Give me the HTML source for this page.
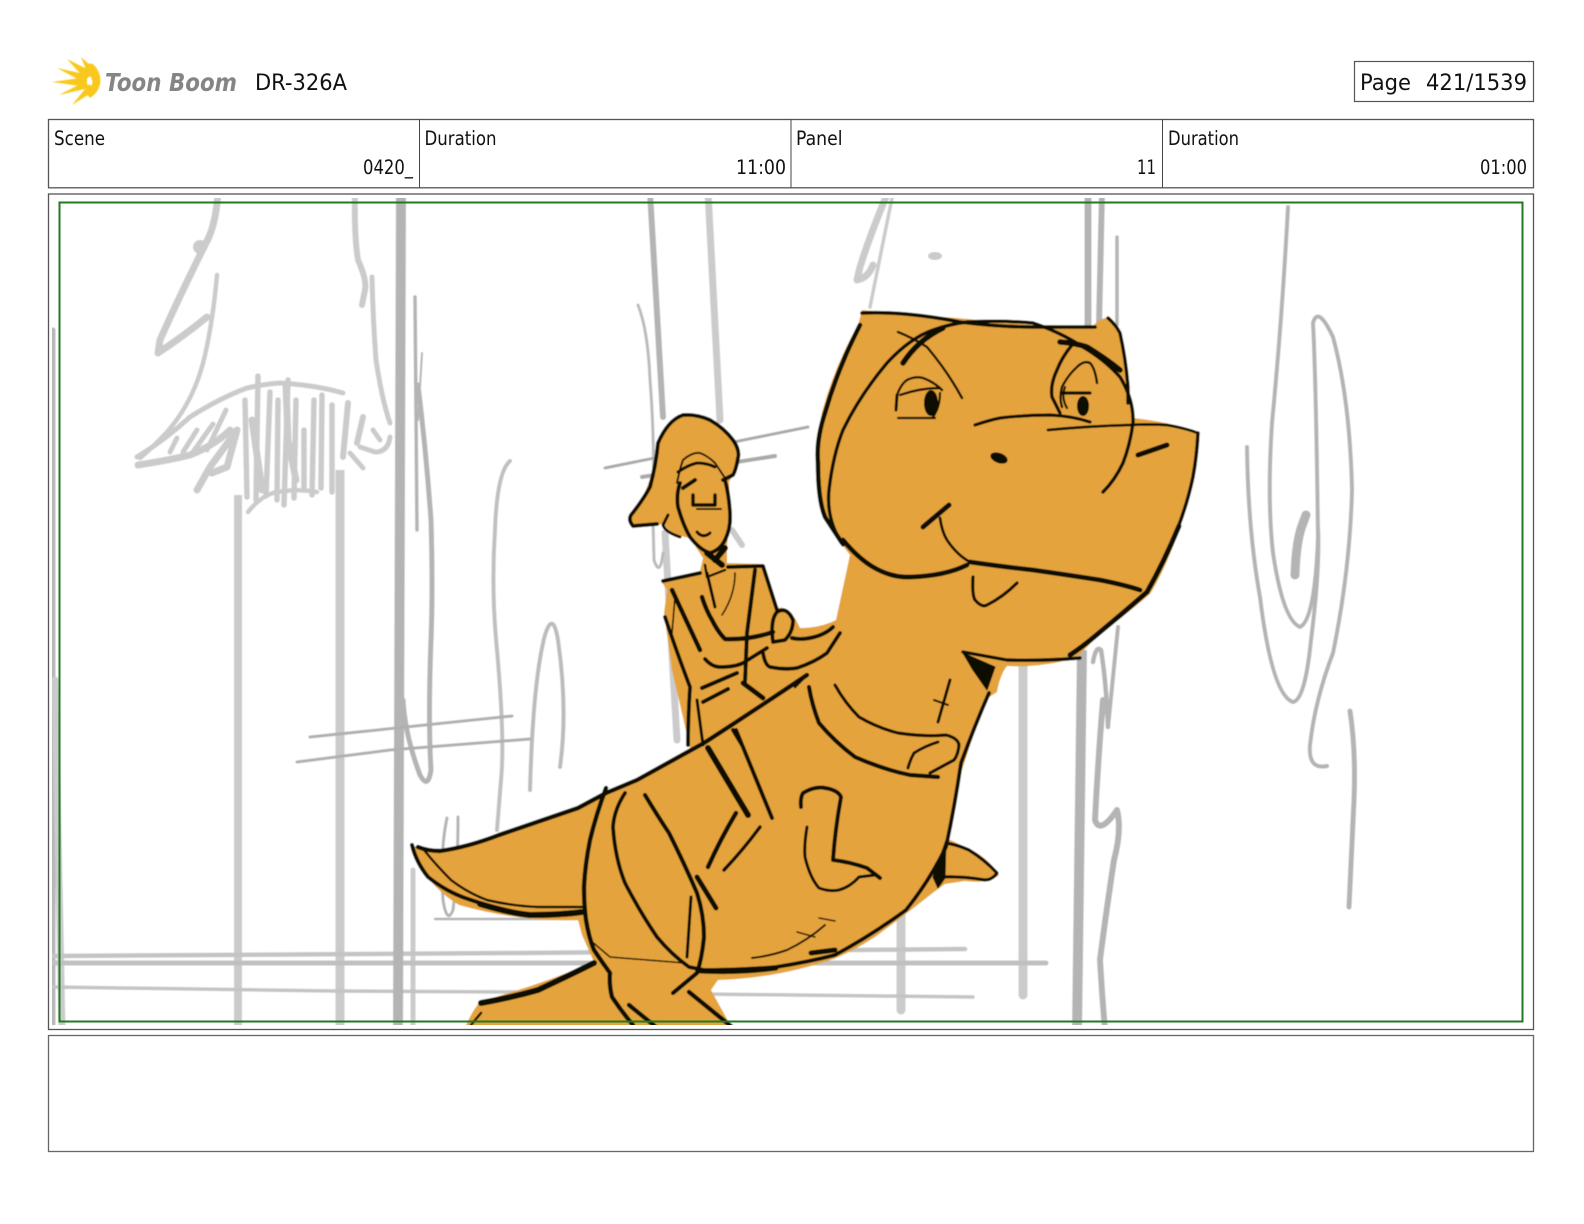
<!DOCTYPE html>
<html lang="en">
<head>
<meta charset="utf-8">
<title>DR-326A Page 421/1539</title>
<style>
html,body{margin:0;padding:0;background:#fff;width:1584px;height:1224px;overflow:hidden}
svg{display:block}
text{font-family:"DejaVu Sans","Liberation Sans",sans-serif;fill:#111}
</style>
</head>
<body>
<svg width="1584" height="1224" viewBox="0 0 1584 1224" xmlns="http://www.w3.org/2000/svg">
<defs>
<clipPath id="c"><rect x="52" y="198" width="1476" height="827"/></clipPath>
<filter id="soft" x="0" y="0" width="100%" height="100%"><feGaussianBlur stdDeviation="0.5"/></filter>
<filter id="softer" x="-5%" y="-5%" width="110%" height="110%"><feGaussianBlur stdDeviation="0.4"/></filter>
</defs>

<!-- Logo -->
<g fill="#f8c91f" filter="url(#softer)">
<path d="M52 82 L87 77 L87 87 Z"/>
<path d="M57 68 L89 75 L85 83 Z"/>
<path d="M67 59 L93 72 L86 80 Z"/>
<path d="M81 57 L98 72 L89 77 Z"/>
<path d="M59 95 L86 81 L89 88 Z"/>
<path d="M72 105 L89 84 L96 90 Z"/>
<path d="M85 63 L93 64 Q102 73 100 84 Q98 93 90 98 L86 93 Q92 89 92 82 Q92 75 86 73 Z"/>
</g>
<circle cx="90" cy="82" r="2.5" fill="#fff"/>
<text x="105" y="91" font-size="24.5" font-style="italic" font-weight="bold" textLength="132" lengthAdjust="spacingAndGlyphs" style="fill:#858585">Toon Boom</text>
<text x="255" y="90" font-size="22.4" textLength="92" lengthAdjust="spacingAndGlyphs">DR-326A</text>

<!-- Page box -->
<rect x="1354.5" y="61.5" width="179" height="40" fill="#fff" stroke="#555" stroke-width="1.2"/>
<text x="1360" y="90" font-size="22.4" textLength="51" lengthAdjust="spacingAndGlyphs">Page</text>
<text x="1426" y="90" font-size="22.4" textLength="101" lengthAdjust="spacingAndGlyphs">421/1539</text>

<!-- Header table -->
<rect x="48.5" y="119.5" width="1485" height="68.3" fill="#fff" stroke="#555" stroke-width="1.3"/>
<path d="M419.5 119.5V187.5M791 119.5V187.5M1162.5 119.5V187.5" stroke="#444" stroke-width="1" fill="none"/>
<text x="54" y="145" font-size="19.7" textLength="51" lengthAdjust="spacingAndGlyphs">Scene</text>
<text x="363" y="174" font-size="19.7" textLength="50" lengthAdjust="spacingAndGlyphs">0420_</text>
<text x="424.5" y="145" font-size="19.7" textLength="72" lengthAdjust="spacingAndGlyphs">Duration</text>
<text x="736" y="174" font-size="19.7" textLength="50" lengthAdjust="spacingAndGlyphs">11:00</text>
<text x="796" y="145" font-size="19.7" textLength="46.5" lengthAdjust="spacingAndGlyphs">Panel</text>
<text x="1137" y="174" font-size="19.7" textLength="19" lengthAdjust="spacingAndGlyphs">11</text>
<text x="1168" y="145" font-size="19.7" textLength="71" lengthAdjust="spacingAndGlyphs">Duration</text>
<text x="1480" y="174" font-size="19.7" textLength="47" lengthAdjust="spacingAndGlyphs">01:00</text>

<!-- Panel frame -->
<rect x="48.5" y="194" width="1485" height="835.5" fill="#fff" stroke="#555" stroke-width="1.3"/>

<g clip-path="url(#c)">
<g filter="url(#soft)">
<rect x="52" y="198" width="1476" height="827" fill="#fff"/>
<!-- Background pencil -->
<g fill="none" stroke-linecap="round" stroke-linejoin="round">
<g stroke="#cbcbcb">
<path stroke-width="5" stroke="#b8b8b8" d="M53 330 L53 1030"/>
<path stroke-width="7" d="M55 680 L62 1030"/>
<path stroke-width="8" stroke-linecap="butt" d="M238 495V1030"/>
<path stroke-width="9" stroke-linecap="butt" d="M340 470V1030"/>
<path stroke-width="9" d="M901 905V1010"/>
<path stroke-width="9" d="M1023 660V995"/>
<path stroke-width="7" d="M708 192L720 420"/>
<path stroke-width="7" d="M665 533L677 740"/>
<path stroke-width="6" d="M732 530L742 545"/>
<path stroke-width="5" d="M413 870V1030"/>
<path stroke-width="4.5" stroke="#c4c4c4" d="M52 956L520 953L965 949"/>
<path stroke-width="5" stroke="#c0c0c0" d="M52 963L520 963L1046 963"/>
<path stroke-width="3.5" stroke="#c4c4c4" d="M52 987L333 991L520 992L973 997"/>
<!-- Left tree -->
<path stroke-width="7" d="M218 192 Q216 225 206 243 Q180 295 160 340 L158 353 Q185 335 207 317"/>
<circle cx="200" cy="247" r="7" fill="#cbcbcb" stroke="none"/>
<path stroke-width="4.5" d="M217 275 Q213 320 205 355 Q195 400 167 432 Q150 450 140 458"/>
<path stroke-width="6" d="M355 192 Q354 235 358 260 Q367 280 365 290 L362 305"/>
<path stroke-width="5" d="M372 277 Q373 320 376 360 Q382 400 390 423"/>
<path stroke-width="5" d="M137 457 Q165 440 190 417 Q220 398 247 388 Q265 384 280 383 Q315 385 343 393"/>
<path stroke-width="7" d="M138 465 Q170 460 190 455 Q215 445 230 430"/>
<path stroke-width="7" d="M197 490 L210 467 L237 430 L227 467 L212 473"/>
<path stroke-width="5" d="M170 452L177 438M183 452L197 430M193 452L213 424M207 450L226 410"/>
<path stroke-width="5.5" d="M245 400L247 497M258 376L256 500M270 392L266 496M278 400L277 500M288 380L284 505M296 400L294 498M304 430L304 490M314 400L312 495M322 395L321 488M332 405L332 492"/>
<path stroke-width="7" d="M286 385L288 440L296 480M252 420L262 490"/>
<path stroke-width="6" d="M348 403L343 457M363 417L357 443"/>
<path stroke-width="5" d="M373 430L380 440M390 437 Q388 452 375 452 L360 447M350 453L363 468"/>
<path stroke-width="4.5" d="M248 512 Q260 497 273 493 Q295 488 317 492"/>
<!-- Top pencil -->
<path stroke-width="7" d="M888 192 Q870 235 860 267 L857 280 Q868 278 873 265"/>
<path stroke-width="3.5" d="M892 198 L870 307"/>
<ellipse cx="935" cy="256" rx="7" ry="4" fill="#cbcbcb" stroke="none"/>
</g>
<g stroke="#b4b4b4">
<path stroke-width="10" stroke-linecap="butt" d="M401 192L398 1030"/>
<path stroke-width="3.5" d="M415 297L417 530"/>
<path stroke-width="2" d="M422 353L418 420"/>
<path stroke-width="5" d="M418 385 Q426 450 431 520 Q433 590 431 640 Q428 720 431 770 Q428 790 420 775 Q405 735 403 700"/>
<path stroke-width="4" stroke="#c0c0c0" d="M510 461 Q497 472 495 530 Q491 590 497 650 Q505 740 501 780 L497 830"/>
<path stroke-width="4" stroke="#bcbcbc" d="M530 790 Q533 680 545 635 Q553 610 558 640 Q568 710 560 767"/>
<path stroke-width="3" stroke="#b0b0b0" d="M310 737L512 716"/>
<path stroke-width="3" stroke="#b0b0b0" d="M297 762L390 750L530 739"/>
<path stroke-width="3" d="M447 818 Q440 850 443 900 Q447 925 453 910 Q458 870 458 817"/>
<path stroke-width="2.5" d="M435 919H580"/>
<!-- Middle -->
<path stroke-width="6" d="M650 192L663 417"/>
<path stroke-width="3" stroke="#bbb" d="M638 305 Q648 330 650 380 Q655 440 653 520 L654 560 Q660 578 663 553"/>
<path stroke-width="3" stroke="#aaa" d="M605 468L808 427"/>
<path stroke-width="4" stroke="#aaa" d="M642 477L775 456"/>
<!-- Right -->
<path stroke-width="10" stroke-linecap="butt" d="M1082 650L1077 1030"/>
<path stroke-width="7" stroke-linecap="butt" d="M1088 192V330"/>
<path stroke-width="6" stroke-linecap="butt" d="M1102 192L1099 325"/>
<path stroke-width="3.5" d="M1117 237V325"/>
<path stroke-width="4.5" d="M1093 662 Q1096 645 1101 650 Q1106 680 1108 727"/>
<path stroke-width="4" d="M1118 627L1108 727"/>
<path stroke-width="6" d="M1103 700 Q1098 760 1095 820 Q1100 835 1117 810 Q1122 830 1114 860 Q1105 920 1100 960 Q1102 995 1105 1030"/>
<path stroke-width="4" d="M1288 207 Q1282 320 1272 423 Q1267 500 1273 553 Q1283 620 1300 627 Q1315 620 1318 537 Q1316 380 1313 323 Q1318 305 1333 337 Q1350 400 1352 490 Q1350 570 1333 653 Q1315 700 1310 745 Q1308 770 1327 766"/>
<path stroke-width="4" d="M1247 447 Q1248 530 1260 597 Q1272 695 1293 702 Q1305 700 1311 640 Q1320 570 1318 527"/>
<path stroke-width="9" d="M1295 575 Q1296 540 1303 523 L1306 515"/>
<path stroke-width="5" d="M1350 711 Q1356 750 1354 800 L1349 907"/>
</g>
</g>

<!-- Orange body -->
<path fill="#e5a33d" d="M862 310 Q960 318 1033 325 L1093 326 Q1100 318 1110 317 Q1122 330 1126 360 L1133 418 Q1170 422 1199 432 Q1197 480 1180 528 Q1165 570 1150 594 Q1122 618 1100 634 L1076 658 Q1040 668 1007 666 Q1000 675 997 692 L985 700 L962 770 L950 830 L946 838 L972 850 Q990 860 999 875 Q990 884 965 881 L945 884 L934 892 Q905 915 875 937 Q855 950 836 958 Q780 978 718 980 L711 990 L733 1030 L464 1030 Q472 1010 481 1001 Q540 985 594 962 L582 935 L578 920 Q519 922 459 905 Q425 885 411 846 Q430 848 440 849 Q470 845 499 833 L578 806 L606 791 L637 778 L681 753 L690 748 L687 735 L672 670 L664 613 L667 590 L661 581 L700 571 L703 558 L690 538 Q670 535 664 524 L634 528 Q625 520 631 512 Q648 495 653 465 Q660 425 683 414 Q715 415 735 443 Q742 460 735 472 L729 482 L731 515 L727 545 L727 563 L764 564 L778 608 Q790 605 800 628 Q820 628 836 620 L850 555 Q830 530 822 505 Q812 460 822 412 Q835 365 858 325 Z"/>

<!-- Ink -->
<g fill="none" stroke="#0c0805" stroke-linecap="round" stroke-linejoin="round">
<!-- Head -->
<path stroke-width="3.6" d="M862 313 Q905 311 960 322 Q1000 327 1033 327 L1095 327"/>
<path stroke-width="4.5" d="M860 325 Q850 345 845 357 Q833 385 825 413 Q816 440 818 463 Q818 500 825 517 L842 543"/>
<path stroke-width="3.4" d="M843 545 Q826 520 829 490 Q833 455 843 430 Q860 395 887 363 Q910 338 933 330 Q950 324 967 322 Q1000 320 1033 323 Q1060 332 1083 347 Q1105 360 1120 377 Q1134 400 1133 423 Q1130 445 1123 463 Q1115 480 1103 492"/>
<path stroke-width="4.8" d="M843 540 Q858 558 873 567 Q892 578 910 577 Q945 576 967 565"/>
<path stroke-width="4.8" d="M970 562 Q1005 567 1033 570 Q1068 575 1100 580 Q1125 585 1140 590"/>
<path stroke-width="3.5" d="M1198 433 Q1197 455 1193 477 Q1187 505 1177 530"/>
<path stroke-width="5" d="M1179 526 Q1164 562 1147 592 Q1122 614 1100 632 Q1085 645 1070 655"/>
<path stroke-width="3.4" d="M963 652 Q985 656 1007 660 Q1045 661 1080 658"/>
<path fill="#0c0805" stroke-width="1" d="M963 653 L995 667 L987 690 L973 670 Z"/>
<path stroke-width="2.8" d="M1048 430 Q1090 426 1130 425 Q1150 424 1167 425 Q1185 428 1198 433"/>
<path stroke-width="3.4" d="M1108 318 Q1116 325 1120 333 Q1126 360 1128 387 L1128 403"/>
<path stroke-width="3.2" d="M975 425 Q990 420 1000 418 Q1025 415 1050 415 Q1072 416 1090 422"/>
<ellipse cx="999" cy="458" rx="9" ry="5" transform="rotate(20 999 458)" fill="#0c0805" stroke="none"/>
<path stroke-width="5" d="M1138 455L1167 445"/>
<path stroke-width="5" d="M923 527L949 505"/>
<path stroke-width="2.8" d="M940 518 Q942 532 947 540 Q957 555 970 562"/>
<path stroke-width="3.2" d="M973 577 Q972 595 975 600 Q982 608 987 605 Q1003 597 1017 583"/>
<!-- Left eye -->
<path stroke-width="5.5" d="M903 363 Q918 340 943 328"/>
<path stroke-width="2.5" d="M898 332 Q913 338 927 347 Q948 372 962 398"/>
<path stroke-width="2.4" d="M897 395 Q901 384 907 380 Q915 376 923 378 Q934 382 942 390"/>
<path stroke-width="2.4" d="M900 395 Q920 388 940 388"/>
<path stroke-width="3" d="M897 395L896 410"/>
<path stroke-width="2.2" d="M898 418H935"/>
<path stroke-width="2.2" d="M940 393 Q940 407 933 417"/>
<ellipse cx="931" cy="403" rx="7" ry="13" fill="#0c0805" stroke="none"/>
<!-- Right eye -->
<path stroke-width="5.5" d="M1060 342 Q1075 343 1087 347 Q1105 358 1120 370"/>
<path stroke-width="3.4" d="M1072 345 Q1062 357 1057 370 Q1050 385 1052 397 L1060 413"/>
<path stroke-width="2.4" d="M1097 383 Q1095 368 1090 363 Q1084 360 1077 367 Q1068 375 1062 387 Q1059 398 1062 407"/>
<path stroke-width="2.2" d="M1065 387 Q1061 398 1067 408"/>
<path stroke-width="3.2" d="M1062 393H1090"/>
<ellipse cx="1083" cy="406" rx="6" ry="10" fill="#0c0805" stroke="none"/>

<!-- Rider -->
<path stroke-width="3.8" d="M657 524 L633 526 Q628 520 631 515 Q643 500 650 487 Q656 465 658 443 Q668 420 683 415 Q697 414 710 420 Q724 428 733 440 Q740 450 738 458 Q736 470 733 475 L723 480"/>
<path stroke-width="2" d="M677 483 Q680 468 683 460 Q692 452 700 453 Q708 456 715 463 L725 478"/>
<path stroke-width="3" d="M678 472 Q688 465 697 463 Q707 463 715 467"/>
<path stroke-width="3.8" d="M680 483 Q676 495 678 507 Q683 525 690 537 Q700 550 710 553 Q720 550 725 540 Q731 528 730 513 Q729 495 725 480"/>
<path stroke-width="3" d="M680 537 Q665 532 663 525 L668 515"/>
<path stroke-width="4" d="M683 488L695 480"/>
<path stroke-width="3.5" d="M693 495V505H715V495"/>
<path stroke-width="2" d="M697 509L721 509"/>
<path stroke-width="3" d="M697 532 Q703 539 710 533"/>
<path stroke-width="6" d="M707 553L722 565M725 548L715 560"/>
<path stroke-width="2.5" d="M705 565L707 577L725 570"/>
<path stroke-width="3.8" d="M663 581L700 573"/>
<path stroke-width="3.8" d="M728 567L763 566L777 610"/>
<path stroke-width="4" d="M755 570L747 633L745 682"/>
<path stroke-width="5" d="M743 683L763 698"/>
<path stroke-width="3" d="M707 573L715 607"/>
<path stroke-width="1.6" d="M735 573 Q735 595 722 615"/>
<path stroke-width="4.5" d="M702 597 Q706 610 712 620 Q718 632 725 639 Q750 640 773 632"/>
<path stroke-width="3.8" d="M773 642 Q770 620 777 612 Q787 606 793 620 Q793 632 785 640 L773 642"/>
<path stroke-width="4" d="M792 638 Q800 640 810 638 Q825 635 833 627"/>
<path stroke-width="3.8" d="M763 653 Q765 665 770 667 Q785 670 797 668 Q815 662 827 653 L840 633"/>
<path stroke-width="3.8" d="M705 659 Q712 667 720 667 Q735 667 743 663 L767 648"/>
<path stroke-width="4.5" d="M672 590L700 650"/>
<path stroke-width="3.8" d="M665 617 Q676 650 690 687 Q688 720 688 745"/>
<path stroke-width="1.6" d="M675 597L672 633"/>
<path stroke-width="4" d="M702 688L737 673"/>
<path stroke-width="4" d="M703 702L728 689"/>
<path stroke-width="3" d="M697 700L703 745"/>
<path stroke-width="4" d="M733 730L742 745"/>

<!-- Body -->
<path stroke-width="2.5" d="M807 675L795 687"/>
<path stroke-width="4.4" d="M807 675 Q755 710 704 743 L637 780 L606 793 L578 808 L499 835 Q468 847 440 851 Q428 851 418 847"/>
<path stroke-width="4" d="M412 845 Q416 862 428 877 Q448 893 471 900 Q500 910 530 915"/>
<path stroke-width="6" d="M480 904 Q510 913 530 915 Q560 915 582 912"/>
<path stroke-width="2.5" d="M424 850 Q436 865 451 880 Q468 893 487 900 Q512 906 538 907 L582 907"/>
<path stroke-width="4.4" d="M606 788 Q596 815 590 840 Q585 865 584 887 Q584 905 586 920 Q589 938 594 950 Q602 962 610 973 Q609 985 612 997 Q622 1012 633 1025"/>
<path stroke-width="3.8" d="M625 793 Q614 810 613 827 Q615 858 625 883 Q640 912 657 937 Q672 955 689 967 L704 970"/>
<path stroke-width="4.2" d="M645 795 Q657 815 669 833 Q685 865 697 893 Q704 915 704 937 Q702 958 697 973 L673 993"/>
<path stroke-width="5" d="M697 877L716 908"/>
<path stroke-width="3" d="M691 897L687 957"/>
<path stroke-width="1.5" d="M590 940 L610 957 L685 963"/>
<path stroke-width="3.8" d="M697 970 Q740 970 776 967 Q808 962 835 955 Q872 935 906 910 Q930 880 946 847 Q955 805 961 763 Q975 725 989 693"/>
<path stroke-width="5" d="M700 971 Q740 973 776 968"/>
<path stroke-width="5" d="M811 953L835 950"/>
<path fill="#0c0805" stroke-width="1" d="M946 840 L933 877 L938 888 L945 878 Z"/>
<path stroke-width="3.2" d="M946 843 Q958 845 969 850 Q985 860 997 873 Q992 880 985 880 Q962 876 942 877"/>
<path stroke-width="4.2" d="M809 687 Q812 705 819 723 Q835 742 855 757 Q885 770 910 775 L938 777"/>
<path stroke-width="3.2" d="M835 685 Q845 703 859 717 Q878 728 898 733 Q925 737 946 735 Q958 738 959 745 Q958 755 954 760 L930 773"/>
<path stroke-width="3" d="M938 742 Q925 746 914 753 Q910 760 908 768"/>
<path stroke-width="3" d="M950 680L938 722"/>
<path stroke-width="2" d="M934 700L948 705"/>
<path stroke-width="6" d="M708 748L748 815"/>
<path stroke-width="4" d="M736 730L772 818"/>
<path stroke-width="4.5" d="M736 813 Q720 840 708 867"/>
<path stroke-width="3.5" d="M760 827 Q743 850 724 870"/>
<path stroke-width="4" d="M801 807 Q800 798 803 793 Q815 786 825 788 Q838 790 841 797 Q835 830 833 860 Q850 862 867 868 L880 878"/>
<path stroke-width="3" d="M807 827 Q804 845 805 857 Q810 878 819 888 Q830 892 839 890 Q850 887 859 877 L875 875"/>
<path stroke-width="2" d="M752 958 Q770 956 787 950 Q808 940 825 925"/>
<path stroke-width="1.5" d="M797 932L815 937"/>
<path stroke-width="1.5" d="M819 918L835 921"/>
<path stroke-width="6" d="M481 1003 Q510 998 538 990 Q570 975 594 963"/>
<path stroke-width="2.5" d="M471 1025 L481 1013"/>
<path stroke-width="4.4" d="M689 992L732 1027"/>
<path stroke-width="4.4" d="M629 1005L656 1027"/>
</g>
</g>
</g>

<!-- Green safe area -->
<rect x="59.5" y="202.5" width="1463" height="819" fill="none" stroke="#1f7a22" stroke-width="2"/>

<!-- Notes box -->
<rect x="48.5" y="1035.5" width="1485" height="116" fill="#fff" stroke="#666" stroke-width="1.3"/>
</svg>
</body>
</html>
